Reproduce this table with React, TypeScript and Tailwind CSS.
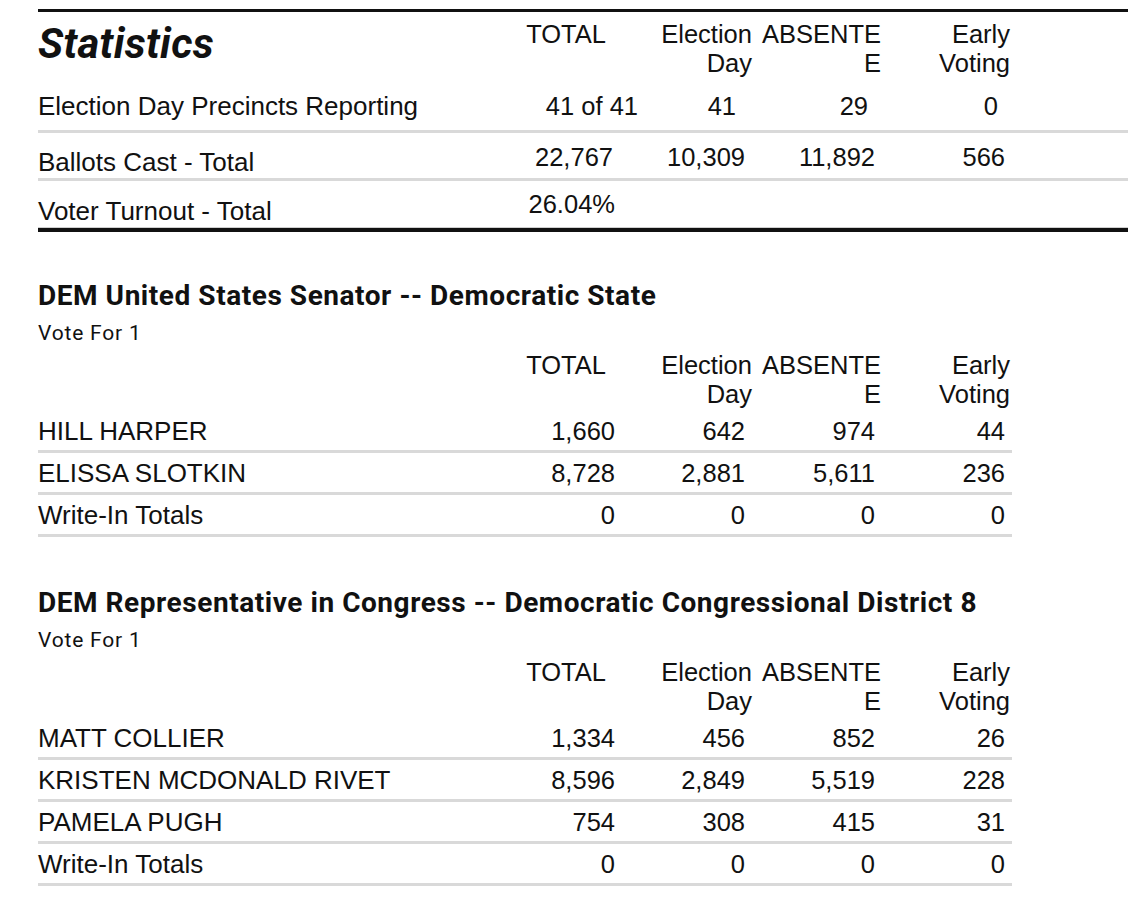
import React from "react";

const GRID = "grid grid-cols-[462px_141px_111px_130px_130px]";

type Cell = { text: string; cls: string };

function HeaderCells({ pt }: { pt: string }) {
  const heads: { lines: string[]; pr: string }[] = [
    { lines: ["TOTAL"], pr: "pr-[35px]" },
    { lines: ["Election", "Day"], pr: "pr-0" },
    { lines: ["ABSENTE", "E"], pr: "pr-[1px]" },
    { lines: ["Early", "Voting"], pr: "pr-[2px]" },
  ];
  return (
    <>
      {heads.map((h, i) => (
        <div key={i} className={`text-right leading-[29px] ${pt} ${h.pr}`}>
          {h.lines.map((l, j) => (
            <div key={j}>{l}</div>
          ))}
        </div>
      ))}
    </>
  );
}

function CandidateRow({ label, values }: { label: string; values: string[] }) {
  const prs = ["pr-[26px]", "pr-[7px]", "pr-[7px]", "pr-[7px]"];
  return (
    <div className={`${GRID} h-[42px] border-b-[3px] border-[#d9d9d9] leading-[28px]`}>
      <div className="pt-[6px] text-[26px]">{label}</div>
      {values.map((v, i) => (
        <div key={i} className={`pt-[6px] text-right ${prs[i]}`}>
          {v}
        </div>
      ))}
    </div>
  );
}

function Contest({
  title,
  rows,
  mt,
}: {
  title: string;
  rows: { label: string; values: string[] }[];
  mt: string;
}) {
  return (
    <div className={`w-[974px] ${mt}`}>
      <div className="font-['Roboto',sans-serif] font-bold text-[28px] leading-[32px] tracking-[0.55px] whitespace-nowrap">
        {title}
      </div>
      <div className="mt-[9px] font-['Roboto',sans-serif] text-[21px] leading-[24px] tracking-[0.8px]">
        Vote For 1
      </div>
      <div className={`${GRID} h-[66px]`}>
        <div />
        <HeaderCells pt="pt-[6px]" />
      </div>
      {rows.map((r, i) => (
        <CandidateRow key={i} label={r.label} values={r.values} />
      ))}
    </div>
  );
}

export default function App() {
  const statRows: { label: string; h: string; border: string; lpt: string; cells: Cell[] }[] = [
    {
      label: "Election Day Precincts Reporting",
      h: "h-[47px]",
      border: "border-b-[3px] border-[#d9d9d9]",
      lpt: "pt-[6px]",
      cells: [
        { text: "41 of 41", cls: "pt-[6px] pr-[3px]" },
        { text: "41", cls: "pt-[6px] pr-[16px]" },
        { text: "29", cls: "pt-[6px] pr-[14px]" },
        { text: "0", cls: "pt-[6px] pr-[14px]" },
      ],
    },
    {
      label: "Ballots Cast - Total",
      h: "h-[48px]",
      border: "border-b-[3px] border-[#d9d9d9]",
      lpt: "pt-[15px]",
      cells: [
        { text: "22,767", cls: "pt-[10px] pr-[28px]" },
        { text: "10,309", cls: "pt-[10px] pr-[7px]" },
        { text: "11,892", cls: "pt-[10px] pr-[7px]" },
        { text: "566", cls: "pt-[10px] pr-[7px]" },
      ],
    },
    {
      label: "Voter Turnout - Total",
      h: "h-[47px]",
      border: "border-b-[1px] border-[#cfcfcf]",
      lpt: "pt-[16px]",
      cells: [
        { text: "26.04%", cls: "pt-[9px] pr-[26px]" },
        { text: "", cls: "" },
        { text: "", cls: "" },
        { text: "", cls: "" },
      ],
    },
  ];

  return (
    <div className="w-[1128px] h-[905px] bg-white pl-[38px] pt-[9px] text-[#111] font-['Liberation_Sans',Arial,sans-serif] text-[25.5px] overflow-hidden">
      <div className="border-t-[3px] border-b-[4px] border-[#111]">
        <div className={`${GRID} h-[74px]`}>
          <div className="pt-[8px] font-['Roboto',sans-serif] italic font-bold text-[42px] leading-[48px] tracking-[0.3px]">
            Statistics
          </div>
          <HeaderCells pt="pt-[8px]" />
        </div>
        {statRows.map((r, i) => (
          <div key={i} className={`${GRID} ${r.h} ${r.border} leading-[28px]`}>
            <div className={`${r.lpt} text-[26px]`}>{r.label}</div>
            {r.cells.map((c, j) => (
              <div key={j} className={`text-right ${c.cls}`}>
                {c.text}
              </div>
            ))}
          </div>
        ))}
      </div>

      <Contest
        mt="mt-[48px]"
        title="DEM United States Senator -- Democratic State"
        rows={[
          { label: "HILL HARPER", values: ["1,660", "642", "974", "44"] },
          { label: "ELISSA SLOTKIN", values: ["8,728", "2,881", "5,611", "236"] },
          { label: "Write-In Totals", values: ["0", "0", "0", "0"] },
        ]}
      />

      <Contest
        mt="mt-[50px]"
        title="DEM Representative in Congress -- Democratic Congressional District 8"
        rows={[
          { label: "MATT COLLIER", values: ["1,334", "456", "852", "26"] },
          { label: "KRISTEN MCDONALD RIVET", values: ["8,596", "2,849", "5,519", "228"] },
          { label: "PAMELA PUGH", values: ["754", "308", "415", "31"] },
          { label: "Write-In Totals", values: ["0", "0", "0", "0"] },
        ]}
      />
    </div>
  );
}
